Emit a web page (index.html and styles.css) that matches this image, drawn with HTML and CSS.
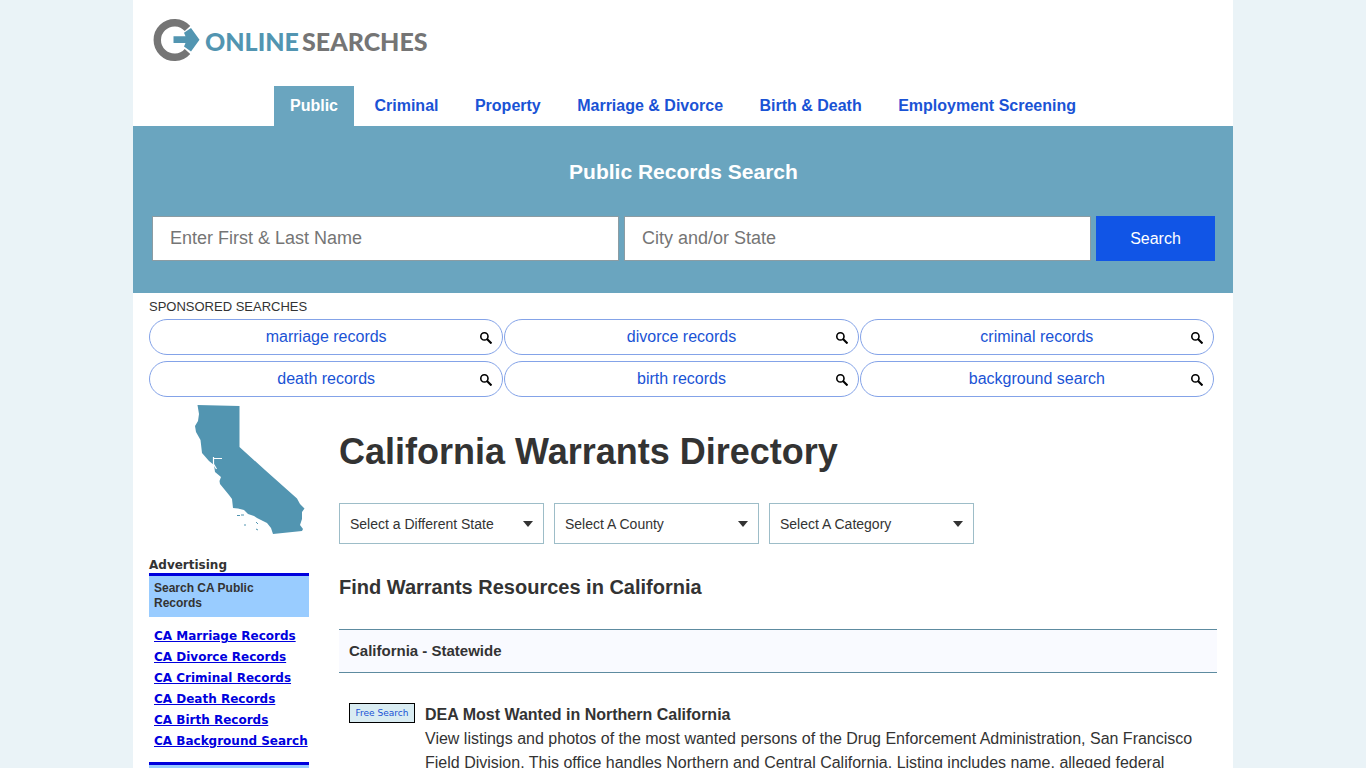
FILE: index.html
```
<!DOCTYPE html>
<html lang="en">
<head>
<meta charset="utf-8">
<meta name="viewport" content="width=device-width, initial-scale=1">
<title>California Warrants Directory</title>
<link rel="stylesheet" href="styles.css">
</head>
<body>
<svg class="sprite" width="0" height="0" aria-hidden="true">
  <symbol id="magnifier" viewBox="0 0 12 12">
    <circle cx="4.4" cy="4.4" r="3.6" fill="none" stroke="#000" stroke-width="1.6"/>
    <path d="M7 7L11.5 11.5" stroke="#000" stroke-width="2.1"/>
  </symbol>
</svg>
<div class="page">
  <header class="header">
    <a class="logo" href="#" aria-label="Online Searches">
      <svg width="276" height="46" viewBox="0 0 276 46">
        <path d="M34.500 11.500A17.300 17.300 0 1 0 34.500 34.500" fill="none" stroke="#757575" stroke-width="7.400"/>
        <path d="M20.500 19.300H32.500L31 15.800L38 11L46.500 22.800L38 34.500L31 29.500L32.500 26H20.500Z" fill="#5295b1"/>
        <text class="logo-online" x="52" y="34">ONLINE</text>
        <text class="logo-searches" x="149" y="34">SEARCHES</text>
      </svg>
    </a>
    <nav>
      <ul class="tabs">
        <li><a class="tab active" href="#">Public</a></li>
        <li><a class="tab" href="#">Criminal</a></li>
        <li><a class="tab" href="#">Property</a></li>
        <li><a class="tab" href="#">Marriage &amp; Divorce</a></li>
        <li><a class="tab" href="#">Birth &amp; Death</a></li>
        <li><a class="tab" href="#">Employment Screening</a></li>
      </ul>
    </nav>
  </header>

  <section class="search">
    <h2 class="search-title">Public Records Search</h2>
    <form class="search-form">
      <input class="search-input" type="text" placeholder="Enter First &amp; Last Name" aria-label="Enter First &amp; Last Name">
      <input class="search-input" type="text" placeholder="City and/or State" aria-label="City and/or State">
      <button class="search-button" type="button">Search</button>
    </form>
  </section>

  <section class="sponsored">
    <p class="sponsored-title">SPONSORED SEARCHES</p>
    <div class="pills">
      <a class="pill" href="#">marriage records<svg class="pill-icon"><use href="#magnifier"/></svg></a>
      <a class="pill" href="#">divorce records<svg class="pill-icon"><use href="#magnifier"/></svg></a>
      <a class="pill" href="#">criminal records<svg class="pill-icon"><use href="#magnifier"/></svg></a>
      <a class="pill" href="#">death records<svg class="pill-icon"><use href="#magnifier"/></svg></a>
      <a class="pill" href="#">birth records<svg class="pill-icon"><use href="#magnifier"/></svg></a>
      <a class="pill" href="#">background search<svg class="pill-icon"><use href="#magnifier"/></svg></a>
    </div>
  </section>

  <div class="columns">
    <aside class="sidebar">
      <svg class="state" width="112" height="132" viewBox="0 0 112 132" role="img" aria-label="California">
        <path fill="#5295b1" d="M2.500 1L44.500 2V43L70 66L102 94.500L105 100L109.500 104.500L107 108V115L105 121L108 125L107 127L78 130L76 124L72 119L66 116L62 114L59 112L53 110L49 106L43 104.500L38 104L37 95L34 91L25 80L24.500 77L26 73L20 68L19 61L14 57L7 49L5.500 36L1 28L0 22L3 17L4 10Z"/>
        <path fill="none" stroke="#fff" stroke-width="1.200" d="M19 54.500H27M18.500 53V60L21.500 65"/>
        <path fill="none" stroke="#5295b1" stroke-width="1" d="M42 111.500H45M46 111H49M49 121H51M61 118L63 120M61 125L63 126"/>
      </svg>
      <p class="ad-label">Advertising</p>
      <section class="ad">
        <h3 class="ad-title">Search CA Public Records</h3>
        <ul class="ad-links">
          <li><a href="#">CA Marriage Records</a></li>
          <li><a href="#">CA Divorce Records</a></li>
          <li><a href="#">CA Criminal Records</a></li>
          <li><a href="#">CA Death Records</a></li>
          <li><a href="#">CA Birth Records</a></li>
          <li><a href="#">CA Background Search</a></li>
        </ul>
      </section>
      <div class="ad-next"></div>
    </aside>

    <main class="main">
      <h1 class="title">California Warrants Directory</h1>
      <div class="filters">
        <select class="filter" aria-label="State"><option>Select a Different State</option></select>
        <select class="filter" aria-label="County"><option>Select A County</option></select>
        <select class="filter" aria-label="Category"><option>Select A Category</option></select>
      </div>
      <h2 class="subtitle">Find Warrants Resources in California</h2>
      <h3 class="group">California - Statewide</h3>
      <article class="entry">
        <a class="free" href="#">Free Search</a>
        <div class="entry-text">
          <h4 class="entry-title">DEA Most Wanted in Northern California</h4>
          <p class="entry-body">View listings and photos of the most wanted persons of the Drug Enforcement Administration, San Francisco Field Division. This office handles Northern and Central California. Listing includes name, alleged federal</p>
        </div>
      </article>
    </main>
  </div>
</div>
</body>
</html>
```
FILE: styles.css
```
* { box-sizing: border-box; }

body {
  margin: 0;
  background: #eaf3f7;
  color: #333;
  font-family: "Liberation Sans", Arial, sans-serif;
  font-size: 16px;
}

h1, h2, h3, h4, p, ul { margin: 0; padding: 0; }
ul { list-style: none; }
a { color: #1a53d5; text-decoration: none; }
.sprite { position: absolute; }

.page {
  max-width: 1100px;
  min-height: 100vh;
  margin: 0 auto;
  background: #fff;
}

.logo { display: block; padding: 17px 20px 0; }
.logo svg { display: block; }
.logo-online, .logo-searches {
  font-family: Lato, sans-serif;
  font-weight: 900;
  font-size: 25px;
}
.logo-online { fill: #5295b1; }
.logo-searches { fill: #757575; }

.tabs { margin-top: 23px; text-align: center; }
.tabs li { display: inline-block; vertical-align: top; }
.tab {
  display: block;
  padding: 0 16px;
  font-weight: bold;
  line-height: 40px;
}
.tab.active { background: #6aa5bf; color: #fff; }

.search { padding: 32px 18px 32px 19px; background: #6aa5bf; }
.search-title {
  color: #fff;
  font-size: 21px;
  line-height: 28px;
  text-align: center;
}
.search-form { display: flex; gap: 5px; margin-top: 30px; }
.search-input {
  flex: 1;
  min-width: 0;
  height: 45px;
  padding: 0 17px;
  border: 1px solid #8b9ca3;
  background: #fff;
  font: 18px "Liberation Sans", Arial, sans-serif;
}
.search-input::placeholder { color: #757575; }
.search-button {
  width: 119px;
  border: 0;
  background: #1155e6;
  color: #fff;
  font: 16px "Liberation Sans", Arial, sans-serif;
}

.sponsored { padding: 4px 19px 0 16px; }
.sponsored-title { font-size: 13px; line-height: 20px; }
.pills {
  display: grid;
  grid-template-columns: repeat(3, 1fr);
  gap: 6px 1px;
  margin-top: 2px;
}
.pill {
  position: relative;
  border: 1px solid #84a3e8;
  border-radius: 18px;
  line-height: 34px;
  text-align: center;
}
.pill-icon {
  position: absolute;
  top: 12px;
  right: 10px;
  width: 12px;
  height: 12px;
}

.columns { display: flex; gap: 30px; padding: 7px 16px 0; }
.sidebar { flex: 0 0 160px; }
.state { display: block; margin-left: 46px; }
.ad-label {
  margin-top: 21px;
  font: bold 12px/16px "DejaVu Sans", Verdana, sans-serif;
}
.ad-title {
  padding: 5px 5px 6px;
  border-top: 3px solid #00d;
  background: #9cf;
  font-size: 12px;
  line-height: 15px;
}
.ad-links {
  padding: 9px 0 10px 5px;
  font: bold 12px/21px "DejaVu Sans", Verdana, sans-serif;
  white-space: nowrap;
}
.ad-links a { color: #00d; text-decoration: underline; }
.ad-next { height: 20px; border-top: 3px solid #00d; background: #9cf; }

.main { flex: 1; min-width: 0; }
.title { margin-top: 25px; font-size: 36px; line-height: 46px; }
.filters { display: flex; flex-wrap: wrap; gap: 10px; margin-top: 28px; }
.filter {
  width: 205px;
  height: 41px;
  padding: 0 30px 0 10px;
  appearance: none;
  border: 1px solid #9dbdc8;
  border-radius: 0;
  background: #fff url("data:image/svg+xml,%3Csvg xmlns='http://www.w3.org/2000/svg' width='10' height='6'%3E%3Cpath d='M0 0H10L5 6Z' fill='%23333'/%3E%3C/svg%3E") no-repeat right 10px center;
  color: #333;
  font: 14px "Liberation Sans", Arial, sans-serif;
}
.subtitle { margin-top: 31px; font-size: 20px; line-height: 24px; }
.group {
  margin-top: 30px;
  padding: 0 10px;
  border: solid #5d8ba0;
  border-width: 1px 0;
  background: #f9faff;
  font-size: 15px;
  line-height: 42px;
}
.entry {
  display: flex;
  align-items: flex-start;
  gap: 10px;
  padding: 30px 10px 0;
}
.free {
  flex: none;
  width: 66px;
  border: 1px solid #000;
  background: #d9ecf2;
  font: 9px/18px "DejaVu Sans", Verdana, sans-serif;
  text-align: center;
}
.entry-title { font-size: 16px; line-height: 24px; }
.entry-body { line-height: 24px; }
```
